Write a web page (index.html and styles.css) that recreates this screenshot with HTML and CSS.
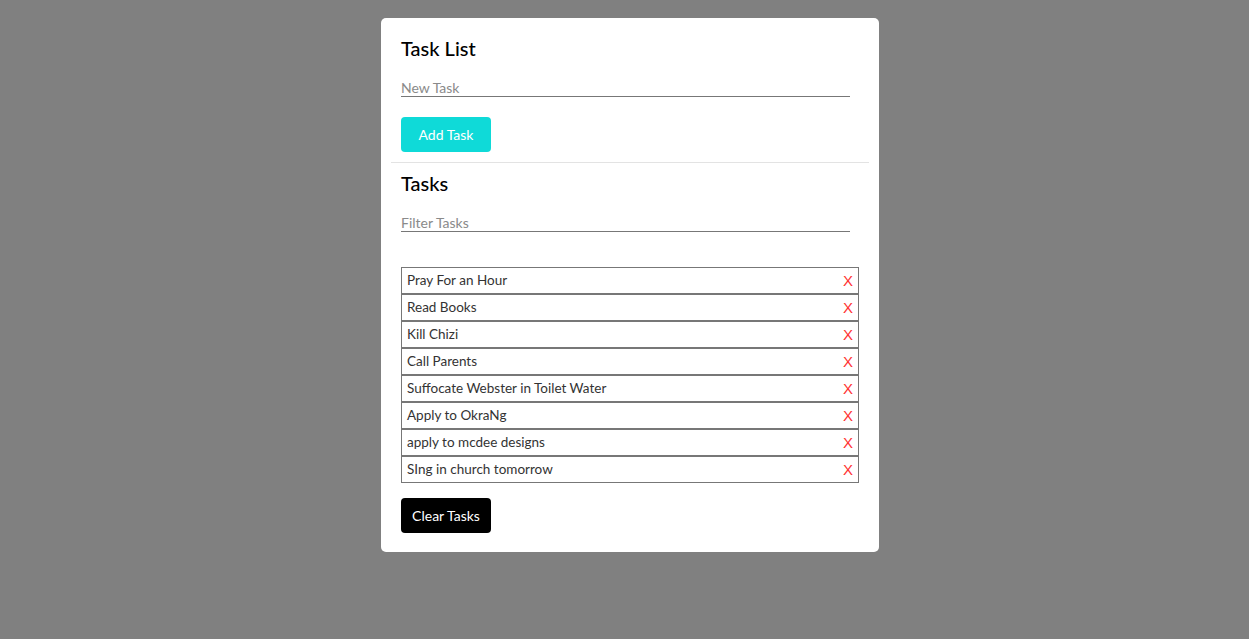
FILE: index.html
```
<!DOCTYPE html>
<html>
<head>
<meta charset="utf-8">
<link rel="stylesheet" href="styles.css">
</head>
<body>
<div class="card">
  <h2 class="title">Task List</h2>
  <input class="field" type="text" placeholder="New Task">
  <button class="btn btn-add">Add Task</button>
  <hr class="divider">
  <h2 class="title title-tasks">Tasks</h2>
  <input class="field" type="text" placeholder="Filter Tasks">
  <ul class="tasks">
    <li class="task"><span>Pray For an Hour</span><a class="del">X</a></li>
    <li class="task"><span>Read Books</span><a class="del">X</a></li>
    <li class="task"><span>Kill Chizi</span><a class="del">X</a></li>
    <li class="task"><span>Call Parents</span><a class="del">X</a></li>
    <li class="task"><span>Suffocate Webster in Toilet Water</span><a class="del">X</a></li>
    <li class="task"><span>Apply to OkraNg</span><a class="del">X</a></li>
    <li class="task"><span>apply to mcdee designs</span><a class="del">X</a></li>
    <li class="task"><span>SIng in church tomorrow</span><a class="del">X</a></li>
  </ul>
  <button class="btn btn-clear">Clear Tasks</button>
</div>
</body>
</html>
```
FILE: styles.css
```
* { box-sizing: border-box; }
html, body { margin: 0; padding: 0; }
body {
  background: #808080;
  font-family: "Lato", "Noto Sans", sans-serif;
  height: 639px;
  padding-top: 18px;
  padding-left: 11px;
}
.card {
  width: 498px;
  margin: 0 auto;
  background: #fff;
  border-radius: 5px;
  padding: 18px 20px 19px 20px;
  display: flex;
  flex-direction: column;
  align-items: flex-start;
}
.title {
  margin: 0;
  font-size: 20px;
  line-height: 24px;
  font-weight: 500;
  color: #000;
}
.field {
  margin-top: 17px;
  width: 449px;
  height: 20px;
  border: none;
  border-bottom: 1px solid #777;
  padding: 2px 0 0 0;
  font-family: inherit;
  font-size: 14px;
  outline: none;
  background: transparent;
}
.field::placeholder { color: #8a8a8a; }
.btn {
  width: 90px;
  height: 35px;
  border: none;
  border-radius: 4px;
  font-family: inherit;
  font-size: 14px;
  color: #fff;
  padding: 0;
}
.btn-add { background: #0fdad8; margin-top: 20px; }
.divider {
  align-self: stretch;
  margin: 10px -10px 0 -10px;
  border: none;
  border-top: 1px solid #e3e3e3;
  height: 0;
}
.title-tasks { margin-top: 8px; }
.title-tasks + .field { margin-top: 17px; }
.tasks {
  list-style: none;
  margin: 35px 0 0 0;
  padding: 0;
  width: 458px;
}
.task {
  height: 27px;
  border: 1px solid #777;
  display: flex;
  align-items: center;
  justify-content: space-between;
  padding: 0 5px 2px 5px;
  font-size: 13.5px;
  color: #333;
}
.del {
  color: #f33;
  font-size: 15px;
  font-family: "Liberation Sans", sans-serif;
  margin-top: 2px;
}
.btn-clear { background: #000; margin-top: 15px; }
```
